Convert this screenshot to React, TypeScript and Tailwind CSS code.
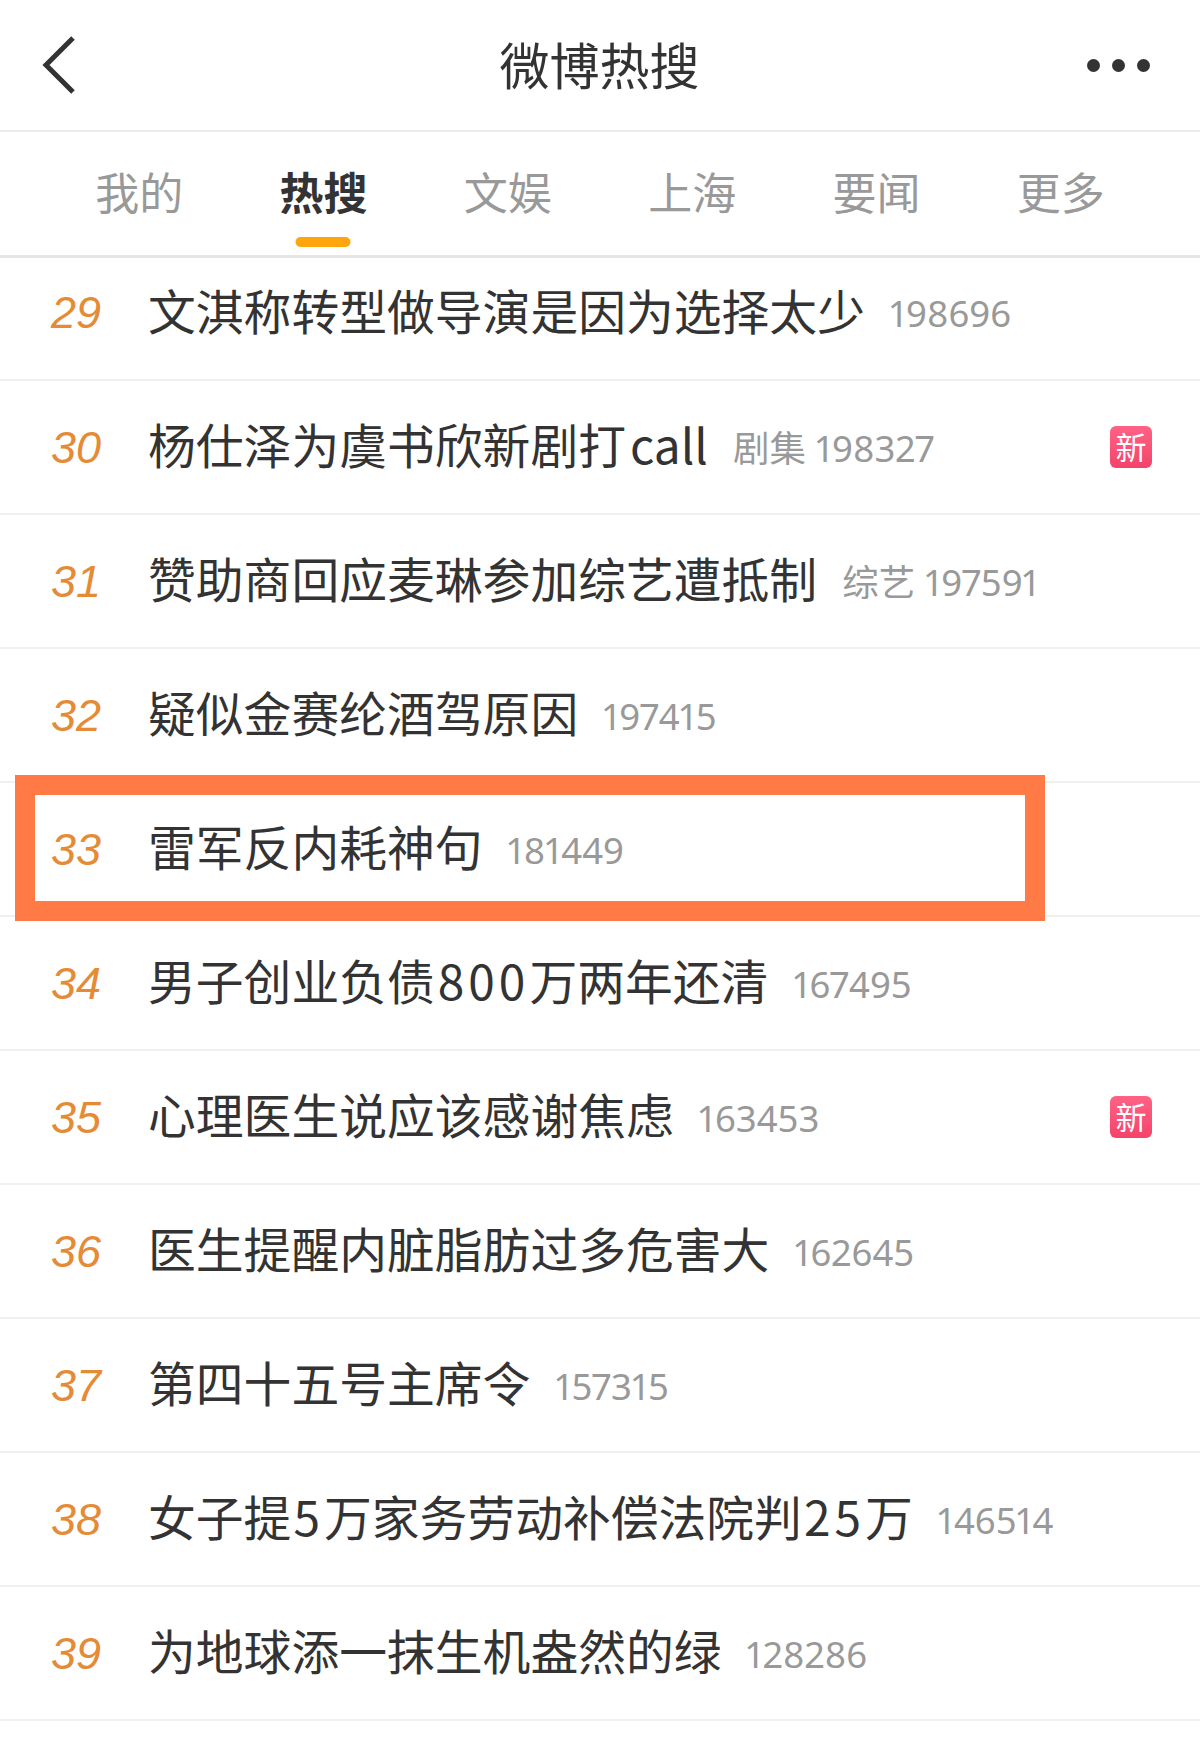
import React from "react";

const font = { fontFamily: '"Noto Sans CJK SC", "Noto Sans", sans-serif' };

type Row = { n: number; title: React.ReactNode; tag?: string; count: string; isNew?: boolean; boxed?: boolean };

const rows: Row[] = [
  { n: 30, title: <>杨仕泽为虞书欣新剧打<span className="ml-[4px]">call</span></>, tag: "剧集", count: "198327", isNew: true },
  { n: 31, title: "赞助商回应麦琳参加综艺遭抵制", tag: "综艺", count: "197591" },
  { n: 32, title: "疑似金赛纶酒驾原因", count: "197415" },
  { n: 33, title: "雷军反内耗神句", count: "181449", boxed: true },
  { n: 34, title: <>男子创业负债<span className="ml-[3px] tracking-[4px]">800</span>万两年还清</>, count: "167495" },
  { n: 35, title: "心理医生说应该感谢焦虑", count: "163453", isNew: true },
  { n: 36, title: "医生提醒内脏脂肪过多危害大", count: "162645" },
  { n: 37, title: "第四十五号主席令", count: "157315" },
  { n: 38, title: <>女子提<span className="ml-[2px] tracking-[4px]">5</span>万家务劳动补偿法院判<span className="ml-[2px] tracking-[4px]">25</span>万</>, count: "146514" },
  { n: 39, title: "为地球添一抹生机盎然的绿", count: "128286" },
];

const tabs = ["我的", "热搜", "文娱", "上海", "要闻", "更多"];

function Content({ n, title, tag, count, isNew }: Row) {
  return (
    <>
      <span className="w-[144px] ml-[4px] shrink-0 text-center italic text-[45px] leading-none text-[#e58a35] font-['Liberation_Sans',sans-serif]">
        {n}
      </span>
      <span className="text-[47.8px] leading-none pb-[6px] text-[#333333] whitespace-nowrap">{title}</span>
      <span className="ml-[25px] pt-[2px] flex items-center gap-[10px] text-[36.5px] leading-none text-[#999999] whitespace-nowrap">
        {tag && <span className="pb-[2px]">{tag}</span>}
        <span className="font-['Noto_Sans',sans-serif] proportional-nums">{count}</span>
      </span>
      {isNew && (
        <span className="ml-auto mr-[48px] w-[42px] h-[42px] rounded-[6px] flex items-center justify-center pb-[3px] bg-gradient-to-b from-[#ff6285] to-[#f5426b] text-white text-[31px] leading-none">
          新
        </span>
      )}
    </>
  );
}

export default function App() {
  return (
    <div style={font} className="w-[1200px] h-[1761px] bg-white overflow-hidden">
      <header className="h-[132px] border-b-2 border-[#ececec] flex items-center justify-between pl-[40px] pr-[50px]">
        <svg width="38" height="60" viewBox="0 0 38 60" fill="none" stroke="#333333" strokeWidth="5">
          <path d="M33 3 L6 30 L33 57" />
        </svg>
        <h1 className="text-[50px] leading-none font-normal text-[#333333] ml-[34px] pb-[5px]">微博热搜</h1>
        <div className="flex gap-[12px]">
          <span className="w-[13px] h-[13px] rounded-full bg-[#333333]" />
          <span className="w-[13px] h-[13px] rounded-full bg-[#333333]" />
          <span className="w-[13px] h-[13px] rounded-full bg-[#333333]" />
        </div>
      </header>

      <nav className="h-[126px] border-b-[3px] border-[#e6e6e6] grid grid-cols-6 px-[47px]">
        {tabs.map((t, i) => (
          <div key={t} className="relative flex items-center justify-center pb-[5px]">
            <span className={i === 1 ? "text-[44px] leading-none font-bold text-[#333333]" : "text-[44px] leading-none text-[#999999]"}>
              {t}
            </span>
            {i === 1 && <span className="absolute bottom-[8px] left-1/2 -translate-x-1/2 w-[55px] h-[10px] rounded-full bg-[#ffa60f]" />}
          </div>
        ))}
      </nav>

      <div className="h-[123px] border-b-2 border-[#f0f0f0] flex items-center pb-[12px]">
        <Content n={29} title="文淇称转型做导演是因为选择太少" count="198696" />
      </div>
      {rows.map((r) => (
        <div key={r.n} className="relative h-[134px] border-b-2 border-[#f0f0f0] flex items-center">
          <Content {...r} />
          {r.boxed && <div className="absolute left-[15px] top-[-8px] w-[1030px] h-[146px] border-[20px] border-[#ff7a45]" />}
        </div>
      ))}
    </div>
  );
}
